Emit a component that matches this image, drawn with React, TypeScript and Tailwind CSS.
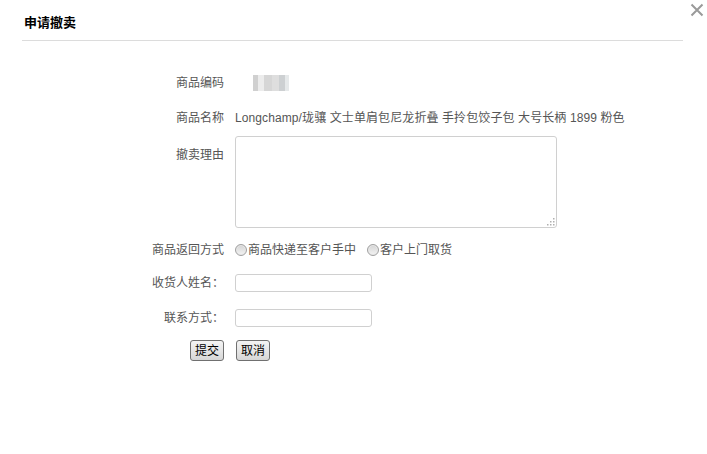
import React from 'react';

const font = { fontFamily: '"Liberation Sans", "Noto Sans CJK SC", sans-serif' };

function Radio({ label }: { label: string }) {
  return (
    <label className="flex items-center">
      <span className="w-[12px] h-[12px] rounded-full border border-[#a0a0a0] bg-gradient-to-b from-[#d4d4d4] to-[#f4f4f4] shadow-[inset_0_0_0_1px_#e8e8e8]" />
      <span className="ml-[1px]">{label}</span>
    </label>
  );
}

function Row({ label, children, className = '', labelClass = '' }: { label: React.ReactNode; children: React.ReactNode; className?: string; labelClass?: string }) {
  return (
    <div className={`flex ${className}`}>
      <div className={`w-[224px] shrink-0 text-right ${labelClass}`}>{label}</div>
      <div className="ml-[11px] flex-1">{children}</div>
    </div>
  );
}

function Btn({ children }: { children: React.ReactNode }) {
  return (
    <button
      type="button"
      className="h-[21px] px-[4px] border border-[#707070] rounded-[3px] bg-gradient-to-b from-[#f4f4f4] via-[#e6e6e6] to-[#d6d6d6] text-[12px] leading-none text-black"
    >
      {children}
    </button>
  );
}

export default function App() {
  return (
    <div className="relative w-[707px] h-[454px] bg-white text-[12px] text-[#555]" style={font}>
      {/* close */}
      <svg className="absolute left-[690px] top-[3px]" width="14" height="14" viewBox="0 0 14 14">
        <path d="M1.5 1.5 L12.5 12.5 M12.5 1.5 L1.5 12.5" stroke="#9a9a9a" strokeWidth="2" />
      </svg>

      <div className="mx-[22px] w-[661px] border-b border-[#dcdcdc] pt-[15px] pb-[10px] pl-[2px]">
        <h1 className="text-[13px] leading-[15px] font-bold text-black">申请撤卖</h1>
      </div>

      <div className="flex flex-col">
        <Row label="商品编码" className="mt-[32px] h-[20px] items-center">
          <div className="flex h-[16px] w-[36px] ml-[18px]">
            <span className="w-[5px] bg-[#d0d0d0]" />
            <span className="w-[6px] bg-[#ececec]" />
            <span className="w-[8px] bg-[#d6d6d6]" />
            <span className="w-[7px] bg-[#dedede]" />
            <span className="w-[6px] bg-[#cdd0d2]" />
            <span className="w-[4px] bg-[#e6e9ea]" />
          </div>
        </Row>

        <Row label="商品名称" className="mt-[15px] h-[20px] items-center">
          <span className="tracking-[0.1px]">Longchamp/珑骧 文士单肩包尼龙折叠 手拎包饺子包 大号长柄 1899 粉色</span>
        </Row>

        <Row label="撤卖理由" className="mt-[8px]" labelClass="pt-[10px]">
          <div className="relative w-[322px] h-[92px]">
            <textarea className="w-full h-full resize-none border border-[#d0d0d0] rounded-[3px] outline-none" />
            <svg className="absolute right-[2px] bottom-[2px]" width="9" height="9" viewBox="0 0 9 9">
              <g fill="#b0b0b0">
                <rect x="7" y="1" width="1.5" height="1.5" />
                <rect x="4" y="4" width="1.5" height="1.5" />
                <rect x="7" y="4" width="1.5" height="1.5" />
                <rect x="1" y="7" width="1.5" height="1.5" />
                <rect x="4" y="7" width="1.5" height="1.5" />
                <rect x="7" y="7" width="1.5" height="1.5" />
              </g>
            </svg>
          </div>
        </Row>

        <Row label="商品返回方式" className="mt-[12px] h-[20px] items-center">
          <div className="flex items-center gap-[11px]">
            <Radio label="商品快递至客户手中" />
            <Radio label="客户上门取货" />
          </div>
        </Row>

        <Row label="收货人姓名：" className="mt-[14px] h-[18px] items-center">
          <input className="block w-[137px] h-[18px] border border-[#d0d0d0] rounded-[3px] outline-none" />
        </Row>

        <Row label="联系方式：" className="mt-[17px] h-[18px] items-center">
          <input className="block w-[137px] h-[18px] border border-[#d0d0d0] rounded-[3px] outline-none" />
        </Row>

        <Row
          label={<Btn>提交</Btn>}
          className="mt-[13px] items-center"
        >
          <div className="ml-[1px]">
            <Btn>取消</Btn>
          </div>
        </Row>
      </div>
    </div>
  );
}
